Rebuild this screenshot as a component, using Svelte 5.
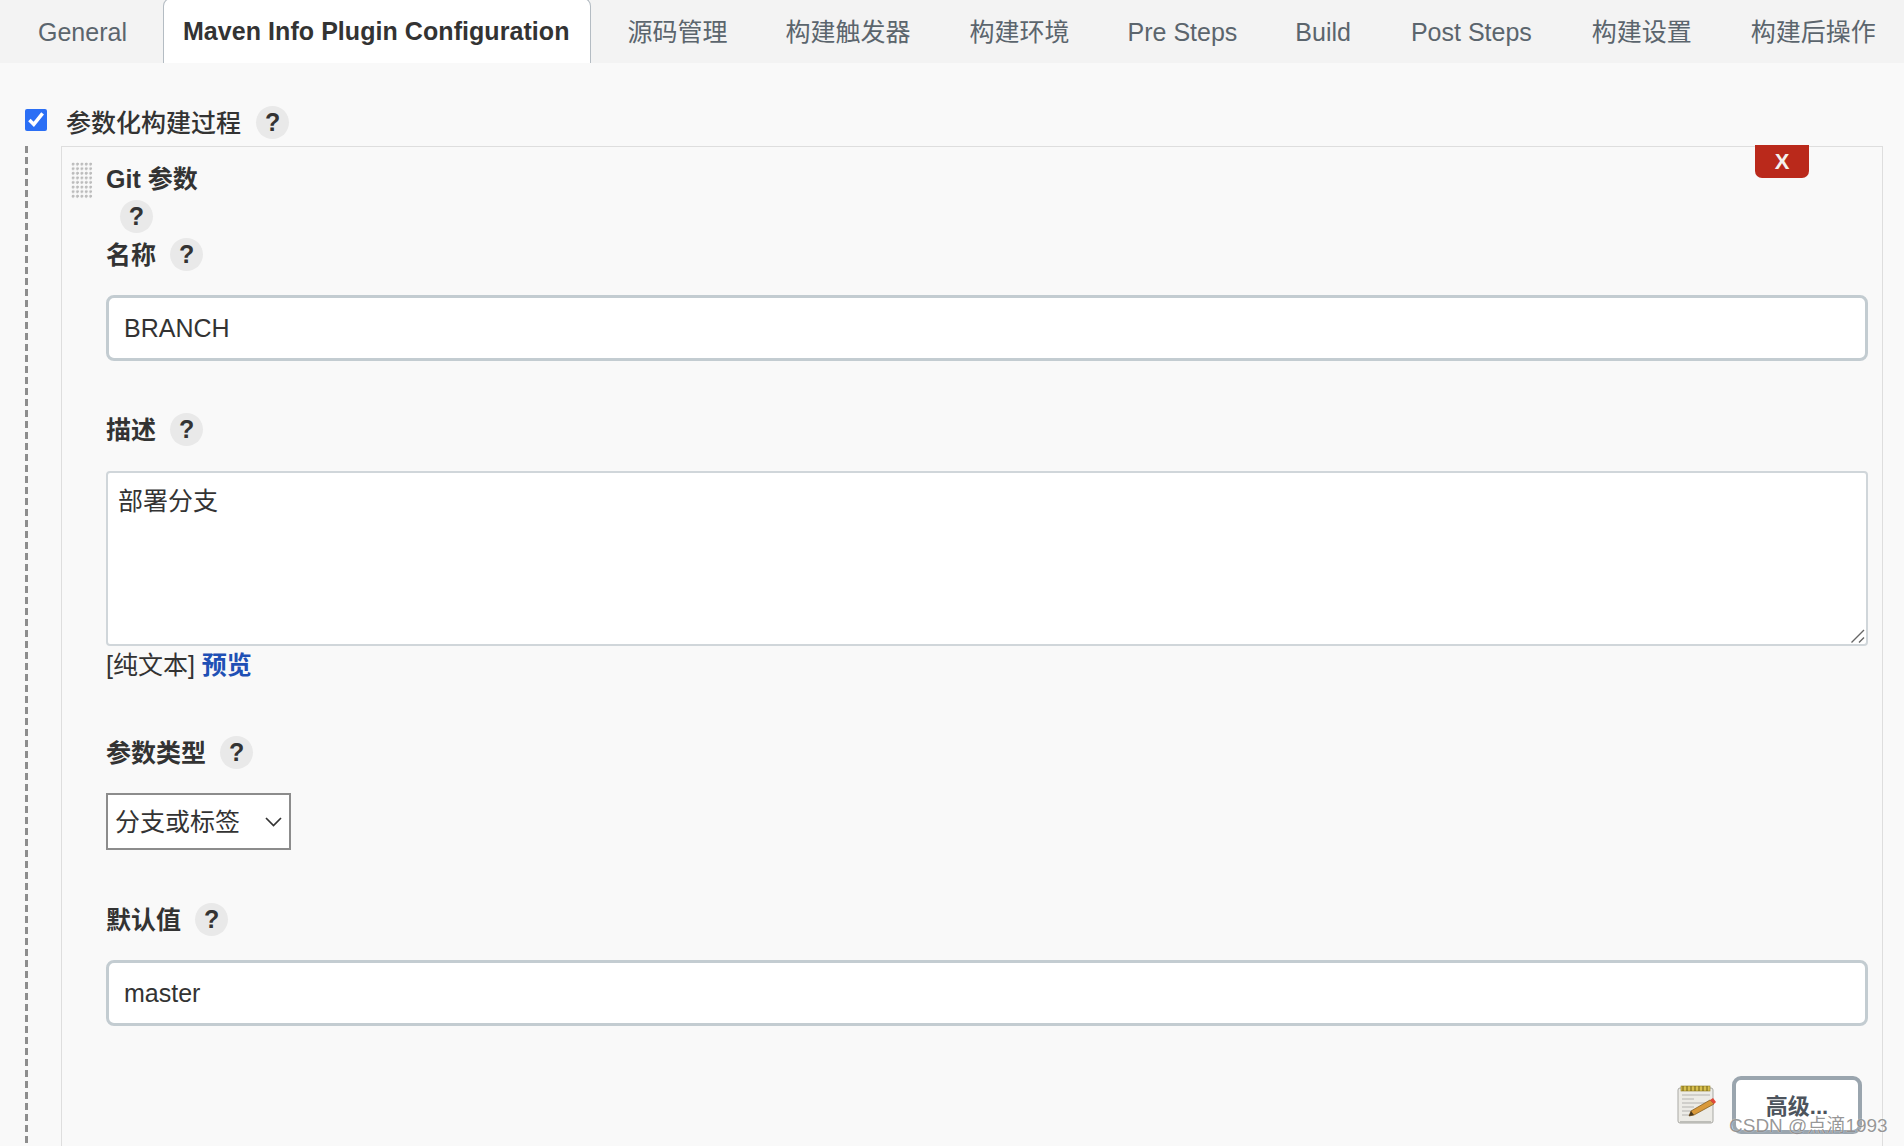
<script>
  // nudge: the reference's Helvetica runs a touch wider than Liberation here and there
  const tabs = [
    { label: 'General', nudge: -2 },
    { label: 'Maven Info Plugin Configuration', nudge: -1 },
    { label: '源码管理', nudge: 0 },
    { label: '构建触发器', nudge: 1 },
    { label: '构建环境', nudge: 0 },
    { label: 'Pre Steps', nudge: 0 },
    { label: 'Build', nudge: 2 },
    { label: 'Post Steps', nudge: 2 },
    { label: '构建设置', nudge: 1 },
    { label: '构建后操作', nudge: 0 }
  ];
</script>

<div class="page">
  <nav class="tabs">
    {#each tabs as tab, i}
      <span class="tab" class:active={i === 1} style:margin-right="{tab.nudge}px">{tab.label}</span>
    {/each}
  </nav>

  <main class="content">
    <div class="section-head">
      <input class="check" type="checkbox" checked />
      <span class="section-label">参数化构建过程</span>
      <span class="help">?</span>
    </div>

    <div class="nested">
      <div class="dashes"></div>
      <section class="card">
        <button class="remove" type="button">X</button>
        <div class="grip"></div>

        <div class="card-title">Git 参数</div>
        <div class="title-help"><span class="help">?</span></div>

        <div class="field-label first">名称 <span class="help">?</span></div>
        <input class="text" type="text" value="BRANCH" />

        <div class="field-label desc">描述 <span class="help">?</span></div>
        <div class="area">
          <textarea>部署分支</textarea>
          <svg class="grabber" width="16" height="16" viewBox="0 0 16 16">
            <path d="M1.5 14.5 L14 2 M9 14.5 L14 9.5" stroke="#666" stroke-width="1.4" fill="none" />
          </svg>
        </div>
        <div class="format">[纯文本] <a href="#preview">预览</a></div>

        <div class="field-label type">参数类型 <span class="help">?</span></div>
        <div class="select">
          <span>分支或标签</span>
          <svg width="17" height="10" viewBox="0 0 17 10">
            <path d="M1 1 L8.5 8.5 L16 1" stroke="#333" stroke-width="1.7" fill="none" />
          </svg>
        </div>

        <div class="field-label dflt">默认值 <span class="help">?</span></div>
        <input class="text" type="text" value="master" />

        <div class="actions">
          <svg class="notepad" width="40" height="40" viewBox="0 0 40 40">
            <rect x="2" y="3" width="35" height="35" rx="2" fill="#ecebe6" stroke="#a9a9a4" />
            <rect x="4" y="36" width="31" height="2" fill="#bdbdb8" />
            <rect x="5" y="1" width="29" height="5" fill="#d8c04e" stroke="#8f7a20" stroke-width=".6" />
            <path d="M7 1v5M11 1v5M15 1v5M19 1v5M23 1v5M27 1v5M31 1v5" stroke="#6d5c14" stroke-width="1" />
            <path d="M6 10h28M6 14h12M6 18h24M6 22h12M6 26h14M6 30h8" stroke="#b4b4b0" stroke-width="1.2" />
            <path d="M13 31 L15 26 L34 15 L38 19 L18 30 Z" fill="#d9993a" stroke="#7a5316" stroke-width=".7" />
            <path d="M13 31 L15 26 L18 30 Z" fill="#4a3a20" />
            <path d="M34 15 L38 19 L40 17 L37 13 Z" fill="#e2493a" />
          </svg>
          <button class="advanced" type="button">高级...</button>
        </div>
      </section>
    </div>
  </main>

  <div class="watermark">CSDN @点滴1993</div>
</div>

<style>
  :global(body) {
    margin: 0;
    overflow: hidden;
    background: #f9f9f9;
  }
  .page {
    position: relative;
    height: 1146px;
    overflow: hidden;
    font-family: "Liberation Sans", "Noto Sans CJK SC", sans-serif;
    font-size: 25px;
    line-height: 30px;
    color: #333;
    background: #f9f9f9;
  }
  .tabs {
    display: flex;
    gap: 18px;
    height: 63px;
    padding-left: 18px;
    background: #f3f3f3;
    white-space: nowrap;
  }
  .tab {
    display: flex;
    align-items: center;
    padding: 0 20px;
    color: #5b656d;
  }
  .tab.active {
    margin-top: -2px;
    font-weight: 700;
    letter-spacing: .06px;
    color: #333;
    background: #fff;
    border: 1px solid #b4bcc3;
    border-bottom: 0;
    border-radius: 8px 8px 0 0;
    padding: 0 20px 0 19px;
  }
  .content {
    padding: 43px 21px 0 25px;
  }
  .section-head {
    display: flex;
    align-items: center;
    height: 33px;
  }
  .check {
    width: 22px;
    height: 22px;
    margin: -6px 19px 0 0;
    accent-color: #2b6ff5;
  }
  .section-label {
    margin-right: 15px;
    font-weight: 500;
  }
  .help {
    display: inline-block;
    width: 33px;
    height: 33px;
    border-radius: 50%;
    background: #e9e9e9;
    color: #333;
    font-weight: 700;
    font-size: 25px;
    line-height: 33px;
    text-align: center;
  }
  .nested {
    display: flex;
    gap: 33px;
    margin-top: 7px;
  }
  .dashes {
    flex: none;
    width: 3px;
    height: 1100px;
    background: repeating-linear-gradient(#8e8e8e 0 7px, transparent 7px 11px);
  }
  .card {
    position: relative;
    flex: 1;
    min-width: 0;
    height: 1100px;
    box-sizing: border-box;
    padding: 15px 14px 0 44px;
    border: 1px solid #dedede;
    background: #f9f9f9;
  }
  .remove {
    position: absolute;
    top: -2px;
    right: 73px;
    width: 54px;
    height: 33px;
    padding: 0;
    border: 0;
    border-radius: 0 0 7px 7px;
    background: #ba291b;
    color: #f4f1ef;
    font: 700 22px "Liberation Sans", sans-serif;
  }
  .grip {
    position: absolute;
    left: 9px;
    top: 15px;
    width: 22px;
    height: 37px;
    background-image: radial-gradient(circle at 2px 2px, #bcbcbc 1.2px, transparent 1.7px);
    background-size: 4.4px 4.6px;
  }
  .card-title {
    font-weight: 700;
    line-height: 34px;
  }
  .title-help {
    padding-left: 14px;
    height: 33px;
    margin-top: 4px;
  }
  .field-label {
    display: flex;
    align-items: center;
    gap: 14px;
    height: 33px;
    font-weight: 700;
  }
  .first { margin: 5px 0 24px; }
  .desc { margin: 52px 0 25px; }
  .type { margin: 53px 0 24px; }
  .dflt { margin: 53px 0 24px; }
  .text {
    display: block;
    width: 100%;
    height: 66px;
    box-sizing: border-box;
    padding: 0 15px;
    border: 3px solid #c3ccd1;
    border-radius: 8px;
    background: #fff;
    color: #333;
    font: 25px "Liberation Sans", "Noto Sans CJK SC", sans-serif;
    outline: none;
  }
  .area {
    position: relative;
    height: 175px;
  }
  textarea {
    display: block;
    width: 100%;
    height: 100%;
    box-sizing: border-box;
    padding: 13px 10px;
    border: 2px solid #d0d6da;
    border-radius: 4px;
    background: #fff;
    color: #333;
    font: 25px/30px "Liberation Sans", "Noto Sans CJK SC", sans-serif;
    resize: none;
    outline: none;
  }
  .grabber {
    position: absolute;
    right: 2px;
    bottom: 2px;
  }
  .format {
    margin-top: 1px;
    line-height: 36px;
  }
  .format a {
    color: #1f50b5;
    font-weight: 700;
    text-decoration: none;
  }
  .select {
    display: flex;
    align-items: center;
    justify-content: space-between;
    width: 185px;
    height: 57px;
    box-sizing: border-box;
    padding: 0 7px;
    border: 2px solid #8c8c8c;
    background: #fff;
  }
  .actions {
    display: flex;
    align-items: center;
    justify-content: flex-end;
    gap: 16px;
    margin-top: 50px;
    padding-right: 6px;
  }
  .advanced {
    width: 130px;
    height: 58px;
    padding: 0 0 3px;
    border: 4px solid #9aa5ae;
    border-radius: 9px;
    background: #fff;
    color: #4d545d;
    font: 700 22px "Liberation Sans", "Noto Sans CJK SC", sans-serif;
  }
  .watermark {
    position: absolute;
    left: 1729px;
    top: 1114px;
    color: rgba(80, 80, 80, .6);
    font-size: 19px;
    line-height: 24px;
    white-space: nowrap;
    text-shadow: 0 0 1px #fff;
  }
</style>
